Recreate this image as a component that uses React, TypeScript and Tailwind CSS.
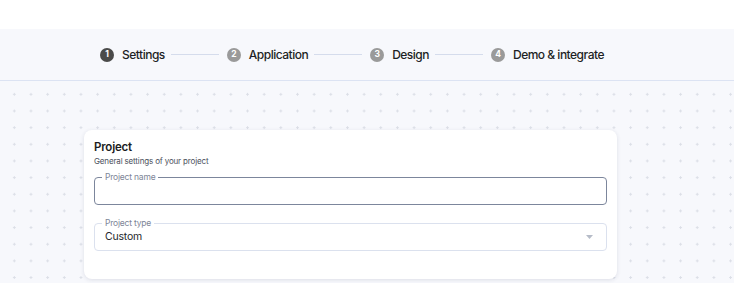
const steps = [
    { n: 1, label: "Settings", active: true },
    { n: 2, label: "Application" },
    { n: 3, label: "Design" },
    { n: 4, label: "Demo & integrate" },
];

function Step({ n, label, active }: { n: number; label: string; active?: boolean }) {
    return (
        <div className="flex items-center gap-[8px]">
            <span
                className={
                    "flex h-[14px] w-[14px] items-center justify-center rounded-full text-[8.5px] font-bold leading-none text-white " +
                    (active ? "bg-[#4a4a4a]" : "bg-[#9a9a9a]")
                }
            >
                {n}
            </span>
            <span className="text-[12px] font-medium tracking-[-0.5px] text-[#1d1f24]">{label}</span>
        </div>
    );
}

function Field({ label, value, focused, select }: { label: string; value?: string; focused?: boolean; select?: boolean }) {
    return (
        <div
            className={
                "relative flex h-[28px] items-center justify-between rounded-[4px] border pl-[10px] pr-[13px] " +
                (focused ? "border-[#7c869c]" : "border-[#dbe1ee]")
            }
        >
            <span className="absolute -top-[6px] left-[7px] bg-white px-[3px] text-[8.5px] leading-[10px] tracking-[-0.2px] text-[#7d8597]">
                {label}
            </span>
            <span className="text-[10.5px] tracking-[-0.2px] text-[#25272c]">{value}</span>
            {select && (
                <svg width="7" height="4" viewBox="0 0 7 4">
                    <path d="M0 0h7L3.5 4z" fill="#b6bcc8" />
                </svg>
            )}
        </div>
    );
}

export default function App() {
    return (
        <div className="h-[283px] w-[734px] overflow-hidden bg-white font-['Inter',sans-serif]">
            <div className="h-[29px] bg-white" />
            <div className="flex h-[52px] items-center justify-center border-b border-[#dce3f3] bg-[#f7f8fc] pr-[30px]">
                {steps.map((s, i) => (
                    <div key={s.n} className="flex items-center">
                        <Step {...s} />
                        {i < steps.length - 1 && <div className="ml-[6px] mr-[8px] h-px w-[48px] bg-[#d5dcec]" />}
                    </div>
                ))}
            </div>
            <div className="h-[202px] bg-[#f7f8fc] bg-[radial-gradient(#dcdfe7_1px,transparent_1.2px)] bg-[size:16.67px_16.67px] bg-[position:6px_5px] pt-[49px]">
                <div className="ml-[84px] w-[533px] rounded-[8px] bg-white px-[10px] pb-[28px] pt-[10px] shadow-[0_1px_4px_rgba(30,40,70,0.12)]">
                    <h2 className="text-[11.5px] font-semibold leading-[15px] tracking-[-0.2px] text-[#1b1d22]">Project</h2>
                    <p className="mt-[1px] text-[8px] leading-[11px] tracking-[-0.15px] text-[#4b505c]">General settings of your project</p>
                    <div className="mt-[10px] flex flex-col gap-[18px]">
                        <Field label="Project name" focused />
                        <Field label="Project type" value="Custom" select />
                    </div>
                </div>
            </div>
        </div>
    );
}
